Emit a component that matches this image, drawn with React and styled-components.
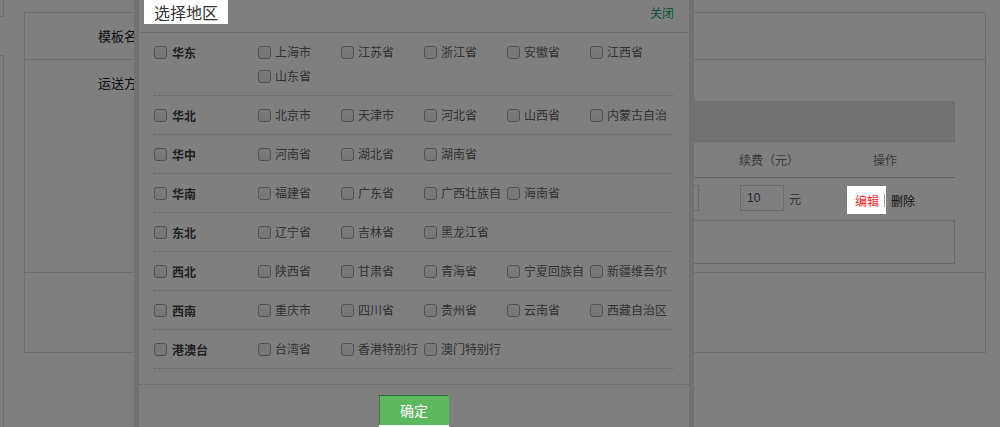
import styled, { createGlobalStyle } from "styled-components"

const GlobalStyle = createGlobalStyle`
  html, body {
    margin: 0;
    height: 100%;
    overflow: hidden;
    background: #fff;
  }
  body {
    font-family: "Noto Sans CJK SC", "Noto Sans", sans-serif;
    font-size: 12px;
    color: #333;
  }
`

const regions = [
  { name: "华东", cities: ["上海市", "江苏省", "浙江省", "安徽省", "江西省", "山东省"] },
  { name: "华北", cities: ["北京市", "天津市", "河北省", "山西省", "内蒙古自治区"] },
  { name: "华中", cities: ["河南省", "湖北省", "湖南省"] },
  { name: "华南", cities: ["福建省", "广东省", "广西壮族自治区", "海南省"] },
  { name: "东北", cities: ["辽宁省", "吉林省", "黑龙江省"] },
  { name: "西北", cities: ["陕西省", "甘肃省", "青海省", "宁夏回族自治区", "新疆维吾尔自治区"] },
  { name: "西南", cities: ["重庆市", "四川省", "贵州省", "云南省", "西藏自治区"] },
  { name: "港澳台", cities: ["台湾省", "香港特别行政区", "澳门特别行政区"] },
]

// page behind the dialog
const Page = styled.div`
  display: flex;
  height: 100vh;
`
const Sidebar = styled.div`
  width: 4px;
  display: flex;
  flex-direction: column;
`
const SideTop = styled.div`
  height: 17px;
  border-right: 1px solid #dcdcdc;
  border-bottom: 1px solid #dcdcdc;
  box-sizing: border-box;
`
const SideBottom = styled.div`
  flex: 1;
  margin-top: 38px;
  border-right: 1px solid #dcdcdc;
  border-top: 1px solid #dcdcdc;
`
const Main = styled.div`
  flex: 1;
  padding: 12px 14px 0 20px;
`
const FormBox = styled.div`
  border: 1px solid #ddd;
`
const FormRow = styled.div`
  display: flex;
  align-items: ${(p) => (p.$center ? "center" : "flex-start")};
  height: ${(p) => p.$h}px;
  border-bottom: ${(p) => (p.$last ? "none" : "1px solid #ddd")};
`
const Label = styled.div`
  width: 138px;
  text-align: right;
  font-size: 13px;
  line-height: 20px;
  color: #222;
  padding-top: ${(p) => p.$top || 0}px;
`
const Content = styled.div`
  flex: 1;
  padding: 12px 30px 0 12px;
`
const ShipLine = styled.div`
  height: 24px;
  line-height: 24px;
  margin-bottom: 5px;
  color: #333;
`
const GreyBar = styled.div`
  height: 39px;
  line-height: 39px;
  padding-left: 12px;
  background: #e6e6e6;
  border: 1px solid #d8d8d8;
  color: #555;
`
const TableRow = styled.div`
  display: grid;
  grid-template-columns: 220px 121px 121px 102px 76px 140px;
  align-items: center;
  height: ${(p) => p.$h}px;
  border-bottom: ${(p) => (p.$head ? "1px solid #ccc" : "none")};
  color: ${(p) => (p.$head ? "#777" : "#333")};
`
const Cell = styled.div`
  display: flex;
  align-items: center;
  justify-content: ${(p) => (p.$center ? "center" : "flex-start")};
  padding-right: ${(p) => p.$pr || 0}px;
`
const NumInput = styled.div`
  width: ${(p) => p.$w}px;
  height: 26px;
  box-sizing: border-box;
  margin-left: 1px;
  border: 1px solid #d6d6d6;
  padding-left: 6px;
  line-height: 24px;
  font-family: "Liberation Sans", sans-serif;
  color: #3a5068;
`
const Unit = styled.span`
  margin-left: 5px;
  color: #666;
`
const Highlight = styled.span`
  position: relative;
  z-index: 20;
  display: inline-flex;
  align-items: center;
  height: 28px;
  margin-top: 4px;
  padding: 0 1px 0 8px;
  background: #fff;
`
const EditLink = styled.span`
  color: #f22;
`
const Bar = styled.span`
  display: inline-block;
  width: 1px;
  height: 13px;
  margin-left: 5px;
  background: #999;
`
const DeleteLink = styled.span`
  margin: 4px 0 0 5px;
  color: #222;
`
const AreaBox = styled.div`
  height: 44px;
  box-sizing: border-box;
  margin-top: 2px;
  border: 1px solid #d6d6d6;
`

// dim layer and dialog
const Overlay = styled.div`
  position: fixed;
  inset: 0;
  z-index: 10;
  background: rgba(0, 0, 0, 0.5);
`
const Dialog = styled.div`
  position: absolute;
  left: 134px;
  top: -5px;
  width: 560px;
  box-sizing: border-box;
  border: 5px solid #e2e2e2;
  background: #fff;
`
const DialogHead = styled.div`
  display: flex;
  justify-content: space-between;
  align-items: flex-start;
  height: 32px;
  border-bottom: 1px solid #ddd;
`
const Title = styled.div`
  position: relative;
  z-index: 20;
  margin-left: 5px;
  padding: 0 10px;
  line-height: 24px;
  font-size: 16px;
  color: #333;
  background: #fff;
`
const Close = styled.a`
  padding: 1px 15px 0 0;
  line-height: 24px;
  color: #14a070;
  cursor: pointer;
`
const RegionList = styled.div`
  padding: 0 15px;
  margin-bottom: 15px;
`
const RegionRow = styled.div`
  display: flex;
  align-items: flex-start;
  padding: 8px 0;
  border-bottom: 1px dotted #c8c8c8;
`
const RegionName = styled.label`
  width: 104px;
  height: 22px;
  display: flex;
  align-items: center;
  font-weight: bold;
  color: #444;
`
const CityGrid = styled.div`
  display: grid;
  grid-template-columns: repeat(5, 83px);
  row-gap: 2px;
`
const City = styled.label`
  display: flex;
  align-items: center;
  height: 22px;
  color: #666;
`
const CityText = styled.span`
  width: 66px;
  height: 22px;
  line-height: 22px;
  margin-left: 4px;
  overflow: hidden;
  word-break: break-all;
`
const Check = styled.input.attrs({ type: "checkbox" })`
  appearance: none;
  box-sizing: border-box;
  width: 13px;
  height: 13px;
  margin: 0 ${(p) => (p.$wide ? 5 : 0)}px 0 0;
  flex: none;
  border: 1px solid #a4a4a4;
  border-radius: 3px;
  background: linear-gradient(#f6f6f6, #ececec);
`
const DialogFoot = styled.div`
  display: flex;
  justify-content: center;
  padding-top: 10px;
  border-top: 1px dotted #c8c8c8;
`
const ButtonWrap = styled.div`
  position: relative;
  z-index: 20;
  padding-bottom: 6px;
  background: #fff;
`
const OkButton = styled.button`
  display: block;
  width: 70px;
  height: 30px;
  border: 1px solid #5cb85c;
  border-top-color: #2f6e30;
  border-left-color: #3b7f3c;
  background: #5cb85c;
  color: #fff;
  font-family: "Noto Sans CJK SC", sans-serif;
  font-size: 14px;
  cursor: pointer;
`

function Background() {
  return (
    <Page>
      <Sidebar>
        <SideTop />
        <SideBottom />
      </Sidebar>
      <Main>
        <FormBox>
          <FormRow $h={46} $center>
            <Label>模板名称：</Label>
          </FormRow>
          <FormRow $h={212}>
            <Label $top={13}>运送方式：</Label>
            <Content>
              <ShipLine>快递</ShipLine>
              <GreyBar>默认运费：1 件内 10 元，每增加 1 件，增加运费 10 元</GreyBar>
              <TableRow $h={35} $head>
                <Cell>运送到</Cell>
                <Cell>首件（件）</Cell>
                <Cell>首费（元）</Cell>
                <Cell>续件（件）</Cell>
                <Cell>续费（元）</Cell>
                <Cell $center>操作</Cell>
              </TableRow>
              <TableRow $h={40}>
                <Cell>未添加地区</Cell>
                <Cell>
                  <NumInput $w={60}>1</NumInput>
                </Cell>
                <Cell>
                  <NumInput $w={60}>10</NumInput>
                </Cell>
                <Cell>
                  <NumInput $w={61}>1</NumInput>
                </Cell>
                <Cell>
                  <NumInput $w={44}>10</NumInput>
                  <Unit>元</Unit>
                </Cell>
                <Cell $center $pr={8}>
                  <Highlight>
                    <EditLink>编辑</EditLink>
                    <Bar />
                  </Highlight>
                  <DeleteLink>删除</DeleteLink>
                </Cell>
              </TableRow>
              <AreaBox />
            </Content>
          </FormRow>
          <FormRow $h={79} $last />
        </FormBox>
      </Main>
    </Page>
  )
}

function AreaDialog() {
  return (
    <Dialog>
      <DialogHead>
        <Title>选择地区</Title>
        <Close>关闭</Close>
      </DialogHead>
      <RegionList>
        {regions.map((r) => (
          <RegionRow key={r.name}>
            <RegionName>
              <Check $wide />
              {r.name}
            </RegionName>
            <CityGrid>
              {r.cities.map((c) => (
                <City key={c}>
                  <Check />
                  <CityText>{c}</CityText>
                </City>
              ))}
            </CityGrid>
          </RegionRow>
        ))}
      </RegionList>
      <DialogFoot>
        <ButtonWrap>
          <OkButton>确定</OkButton>
        </ButtonWrap>
      </DialogFoot>
    </Dialog>
  )
}

export default function App() {
  return (
    <>
      <GlobalStyle />
      <Background />
      <Overlay />
      <AreaDialog />
    </>
  )
}
